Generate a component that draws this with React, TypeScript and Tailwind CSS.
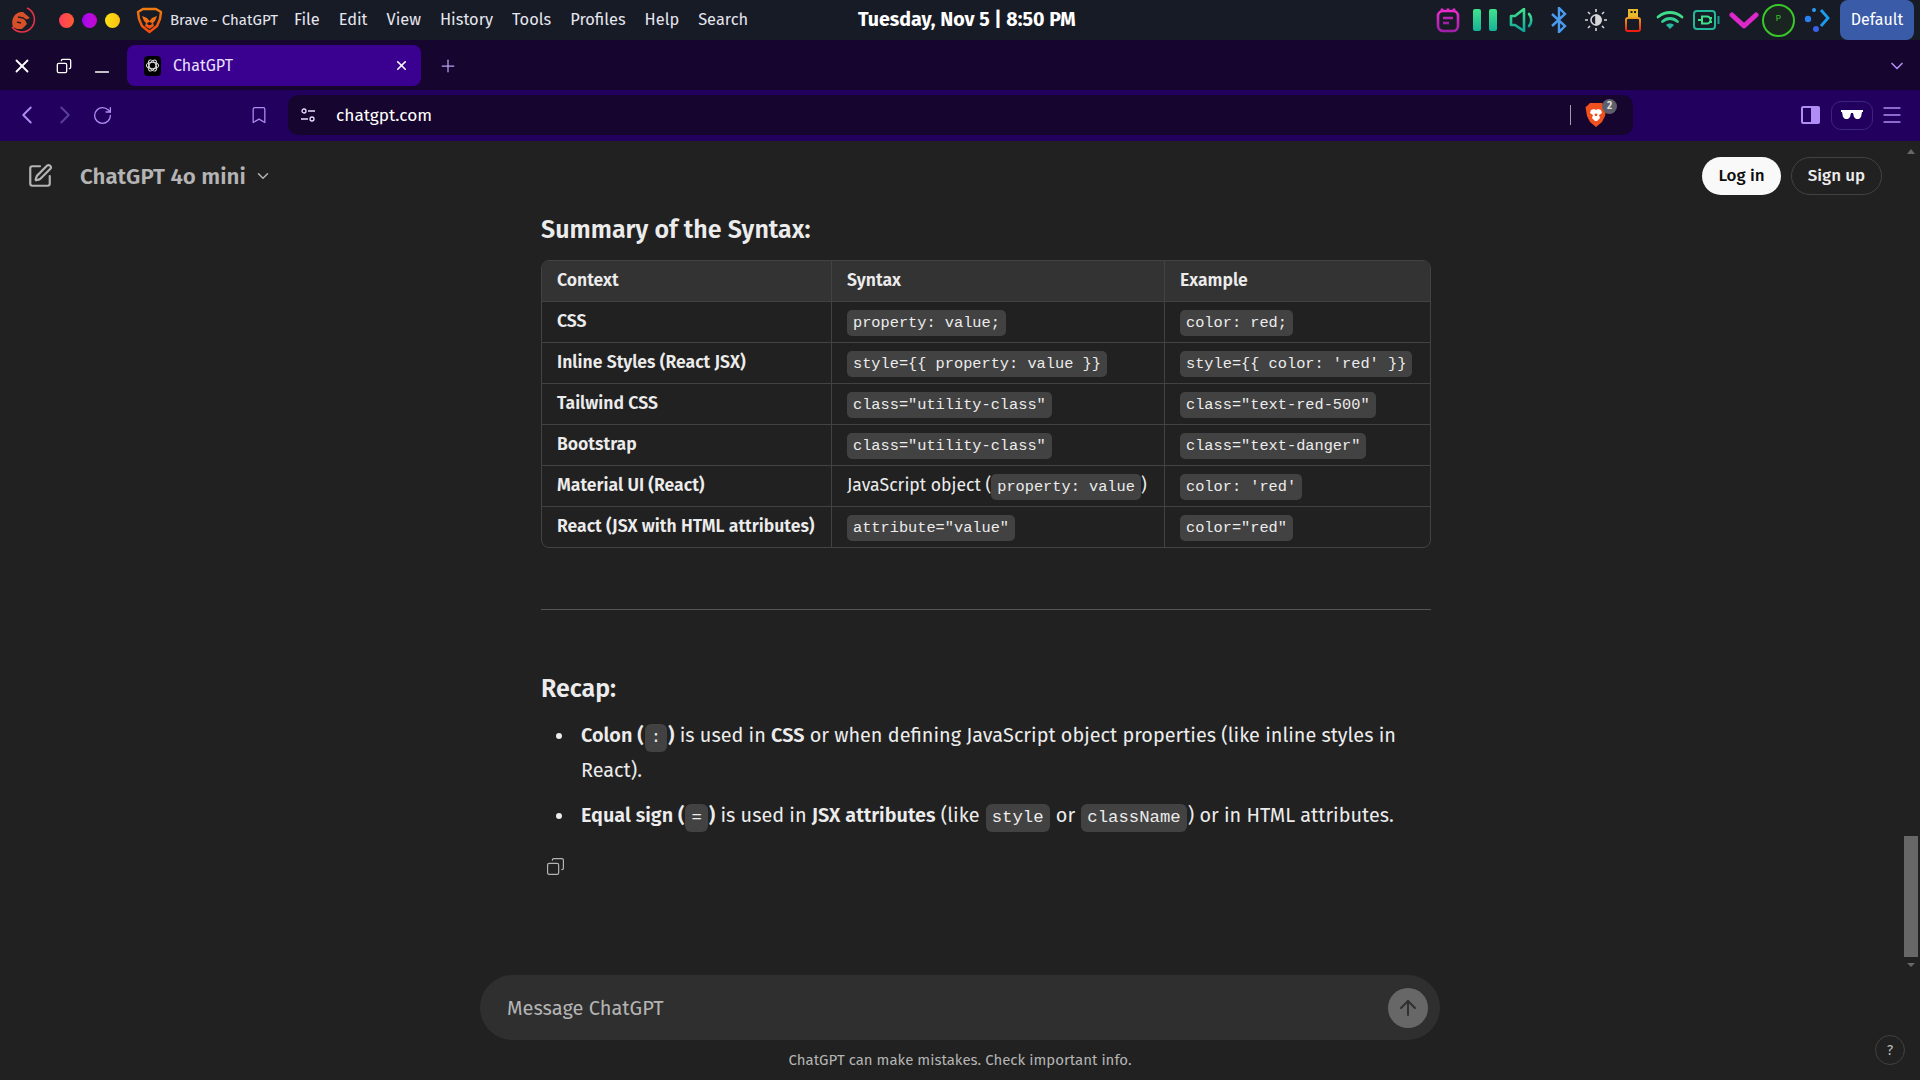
import React from 'react';
import { ChevronDown, ChevronLeft, ChevronRight, RotateCw, Bookmark, Plus, X, Menu, ArrowUp, SquarePen, Copy, Minus } from 'lucide-react';

const Chip = ({ children }: { children: React.ReactNode }) => (
  <code className="inline-block h-[26px] rounded-[5px] bg-[#424242] px-[6px] font-['Liberation_Mono',monospace] text-[15.300px] leading-[26px] text-[#ececec]">
    {children}
  </code>
);

const ListChip = ({ children }: { children: React.ReactNode }) => (
  <code className="mx-[1px] inline-block h-[28px] rounded-[6px] bg-[#424242] px-[6px] align-baseline font-['Liberation_Mono',monospace] text-[17.300px] leading-[28px] text-[#ececec]">
    {children}
  </code>
);

const rows: [string, React.ReactNode, React.ReactNode][] = [
  ['CSS', <Chip>property: value;</Chip>, <Chip>color: red;</Chip>],
  ['Inline Styles (React JSX)', <Chip>{'style={{ property: value }}'}</Chip>, <Chip>{"style={{ color: 'red' }}"}</Chip>],
  ['Tailwind CSS', <Chip>class="utility-class"</Chip>, <Chip>class="text-red-500"</Chip>],
  ['Bootstrap', <Chip>class="utility-class"</Chip>, <Chip>class="text-danger"</Chip>],
  ['Material UI (React)', <>JavaScript object (<Chip>property: value</Chip>)</>, <Chip>color: 'red'</Chip>],
  ['React (JSX with HTML attributes)', <Chip>attribute="value"</Chip>, <Chip>color="red"</Chip>],
];

const Grad = ({ id, from, to }: { id: string; from: string; to: string }) => (
  <defs>
    <linearGradient id={id} x1="0" y1="0" x2="0" y2="1">
      <stop offset="0" stopColor={from} />
      <stop offset="1" stopColor={to} />
    </linearGradient>
  </defs>
);

// outlined head in the system bar
const BraveOutline = () => (
  <svg width="27" height="27" viewBox="0 0 27 27" fill="none">
    <Grad id="lion" from="#f07c10" to="#f04a10" />
    <path d="M7 2h13l5 3-1 7-3 7-7.500 6L6 19 3 12 2 5z" stroke="url(#lion)" strokeWidth="2.400" strokeLinejoin="round" />
    <path d="M6 9l5 2 2.500 3 2.500-3 5-2-2 5-2 2 1 3-4.500 3L9 19l1-3-2-2z" fill="url(#lion)" />
    <path d="M11 16l2.500-1 2.500 1-1 2h-3z" fill="#171b26" />
  </svg>
);

// filled shield in the address bar
const BraveShield = () => (
  <svg width="22" height="26" viewBox="0 0 22 26">
    <path d="M5 1h12l3 3 1.500 1-1.500 9-3 6-6 5-6-5-3-6L.500 5 2 4z" fill="#f1501f" />
    <path d="M6 8l3-1 2 1 2-1 3 1 1 3-3 2 1 3-3 3h-2l-3-3 1-3-3-2z" fill="#ffffff" />
    <path d="M9.500 12l1.500-.500 1.500.500-.500 2h-2z" fill="#f1501f" />
  </svg>
);

const TrayIcons = () => (
  <div className="flex items-center">
    <div className="flex w-[37px] justify-center">
      <svg width="24" height="26" viewBox="0 0 24 26" fill="none" strokeWidth="2.600">
        <Grad id="g1" from="#ec2bd0" to="#a01fa8" />
        <rect x="2" y="4" width="20" height="20" rx="5" stroke="url(#g1)" />
        <path d="M6 1.500v3M12 1.500v3M18 1.500v3M7 11h10M7 16h6" stroke="url(#g1)" />
      </svg>
    </div>
    <div className="flex w-[37px] justify-center gap-[8px]">
      <div className="h-[22px] w-[8px] rounded-[2px] bg-gradient-to-b from-[#3fe38a] to-[#12b39a]" />
      <div className="h-[22px] w-[8px] rounded-[2px] bg-gradient-to-b from-[#3fe38a] to-[#12b39a]" />
    </div>
    <div className="flex w-[37px] justify-center">
      <svg width="26" height="24" viewBox="0 0 26 24" fill="none" strokeWidth="2.600">
        <Grad id="g2" from="#41e08a" to="#0fa79c" />
        <path d="M2 8h4l9-7v22l-9-6H2z" stroke="url(#g2)" strokeLinejoin="round" />
        <path d="M20 6c3 3 3 9 0 12" stroke="url(#g2)" strokeLinecap="round" />
      </svg>
    </div>
    <div className="flex w-[37px] justify-center">
      <svg width="16" height="26" viewBox="0 0 16 26" fill="none" strokeWidth="2.400">
        <path d="M1 7l13 12-6 6V1l6 6L1 19" stroke="#4a9bf0" />
      </svg>
    </div>
    <div className="flex w-[37px] justify-center">
      <svg width="22" height="22" viewBox="0 0 22 22" fill="none" stroke="#d6d6d6" strokeWidth="1.600">
        <circle cx="11" cy="11" r="5" />
        <path d="M11 6a5 5 0 0 1 0 10z" fill="#d6d6d6" />
        <path d="M11 0v3M11 19v3M0 11h3M19 11h3M3 3l2 2M17 17l2 2M3 19l2-2M17 5l2-2" />
      </svg>
    </div>
    <div className="flex w-[37px] justify-center">
      <svg width="16" height="24" viewBox="0 0 16 24" fill="none">
        <Grad id="g6" from="#f0a020" to="#ee1c10" />
        <rect x="3" y="1" width="10" height="9" fill="#e8b92c" />
        <rect x="5.500" y="3" width="2" height="2" fill="#171b26" />
        <rect x="9" y="3" width="2" height="2" fill="#171b26" />
        <rect x="1" y="10" width="14" height="13" rx="2" stroke="url(#g6)" strokeWidth="2" />
      </svg>
    </div>
    <div className="flex w-[37px] justify-center">
      <svg width="28" height="20" viewBox="0 0 28 20" fill="none" strokeWidth="2.800" strokeLinecap="round">
        <path d="M2 7c7-6 17-6 24 0" stroke="#3fdc8a" />
        <path d="M6.500 11.500c4.500-4 10.500-4 15 0" stroke="#35d090" />
        <path d="M10 15l4 4 4-4c-2-2-6-2-8 0z" fill="#25b9a0" stroke="none" />
      </svg>
    </div>
    <div className="flex w-[37px] justify-center">
      <svg width="27" height="20" viewBox="0 0 27 20" fill="none">
        <rect x="1" y="1" width="21" height="18" rx="3" stroke="#22b89a" strokeWidth="2" />
        <path d="M5 10h4M9 6.500h5a3.500 3.500 0 0 1 0 7H9zM16 8h3M16 12h3" stroke="#3ce08a" strokeWidth="2" />
        <rect x="24.500" y="6" width="2" height="8" fill="#1a9c8a" />
      </svg>
    </div>
    <div className="flex w-[37px] justify-center">
      <svg width="30" height="20" viewBox="0 0 30 20" fill="none">
        <path d="M3 5l12 11L27 5" stroke="#dc28c8" strokeWidth="5" strokeLinecap="round" strokeLinejoin="round" />
      </svg>
    </div>
    <div className="flex w-[33px] justify-center">
      <div className="flex h-[33px] w-[33px] items-center justify-center rounded-full border-2 border-[#39c82a] bg-[#1a2420] font-['Liberation_Mono',monospace] text-[9px] text-[#39c82a]">
        P
      </div>
    </div>
    <div className="ml-[4px] flex w-[36px] justify-center">
      <svg width="26" height="26" viewBox="0 0 26 26" fill="none">
        <circle cx="4" cy="12" r="3.200" fill="#2a80f0" />
        <circle cx="10" cy="3" r="2" fill="#2a9cf0" />
        <circle cx="12" cy="22" r="3" fill="#3a60e8" />
        <path d="M17 3l7 8-7 8" stroke="#1a9cf0" strokeWidth="2.800" />
      </svg>
    </div>
    <div className="ml-[5px] flex h-[40px] w-[74px] items-center justify-center rounded-[8px] bg-[#3a5ba8] text-[16px] text-white">
      Default
    </div>
  </div>
);

export default function App() {
  return (
    <div className="flex h-screen w-full flex-col overflow-hidden bg-[#212121] font-['Fira_Sans','Noto_Sans',sans-serif]">
      {/* system bar */}
      <div className="relative flex h-[40px] shrink-0 items-center bg-[#171b26] text-[16.400px] text-[#e6e6ee]">
        <svg className="ml-[9px]" width="28" height="28" viewBox="0 0 28 28" fill="none">
          <path d="M18 2a12.500 12.500 0 1 1-15 19" stroke="#e8324a" strokeWidth="1.600" />
          <path d="M4 21C1 12 7 5 14 6l7 6-5 2 2 4-5 5-5 0z" fill="#d8502a" />
          <path d="M9 11l5 1 3 2M8 16l4 1" stroke="#2a1a20" strokeWidth="1.500" />
        </svg>
        <div className="ml-[22px] flex gap-[8px]">
          <div className="h-[15px] w-[15px] rounded-full bg-gradient-to-r from-[#ff3d5a] to-[#ff5a30]" />
          <div className="h-[15px] w-[15px] rounded-full bg-gradient-to-r from-[#a000f0] to-[#c800d0]" />
          <div className="h-[15px] w-[15px] rounded-full bg-gradient-to-r from-[#ffe014] to-[#f8c014]" />
        </div>
        <div className="ml-[16px] flex"><BraveOutline /></div>
        <span className="ml-[7px] text-[15px]">Brave - ChatGPT</span>
        <div className="ml-[16px] flex gap-[19px]">
          <span>File</span>
          <span>Edit</span>
          <span>View</span>
          <span>History</span>
          <span>Tools</span>
          <span>Profiles</span>
          <span>Help</span>
          <span>Search</span>
        </div>
        <div className="absolute left-[858px] text-[19.600px] font-bold text-white">Tuesday, Nov 5 | 8:50 PM</div>
        <div className="ml-auto mr-[6px]"><TrayIcons /></div>
      </div>

      {/* tab strip */}
      <div className="flex h-[50px] shrink-0 items-center bg-[#16052e] pt-[1px] text-[#e8e0ff]">
        <X className="ml-[11px] text-white" size={22} strokeWidth={2} />
        <Copy className="ml-[23px] -scale-x-100 text-white" size={16} strokeWidth={2} />
        <Minus className="ml-[19px] mt-[12px] text-white" size={22} strokeWidth={1.500} />
        <div className="ml-[14px] flex h-[41px] w-[294px] items-center rounded-[8px] bg-[#3a0090] text-[16px]">
          <div className="ml-[17px] flex h-[20px] w-[17px] items-center justify-center rounded-[4px] bg-black">
            <svg width="15" height="15" viewBox="0 0 16 16" fill="none" stroke="#e0e0e0" strokeWidth="1.100">
              <ellipse cx="8" cy="8" rx="6.500" ry="3.500" />
              <ellipse cx="8" cy="8" rx="6.500" ry="3.500" transform="rotate(60 8 8)" />
              <ellipse cx="8" cy="8" rx="6.500" ry="3.500" transform="rotate(120 8 8)" />
            </svg>
          </div>
          <span className="ml-[12px]">ChatGPT</span>
          <X className="ml-auto mr-[12px] text-white" size={15} strokeWidth={2.500} />
        </div>
        <Plus className="ml-[17px] text-[#b9a0f0]" size={20} strokeWidth={1.500} />
        <ChevronDown className="ml-auto mr-[13px] text-[#b08cf5]" size={20} strokeWidth={2} />
      </div>

      {/* toolbar */}
      <div className="flex h-[51px] shrink-0 items-center bg-[#22005e] pb-[1px] text-[#b08cf5]">
        <ChevronLeft className="ml-[12px]" size={30} strokeWidth={1.500} />
        <ChevronRight className="ml-[8px] text-[#5c3f9a]" size={30} strokeWidth={1.500} />
        <RotateCw className="ml-[12px]" size={21} strokeWidth={1.500} />
        <Bookmark className="ml-[136px]" size={20} strokeWidth={1.500} />
        <div className="ml-[19px] flex h-[40px] w-[1345px] items-center rounded-[10px] bg-[#16052e]">
          <svg className="ml-[12px]" width="16" height="16" viewBox="0 0 16 16" fill="none" stroke="#e8e0ff" strokeWidth="1.300">
            <circle cx="4" cy="4" r="2" />
            <circle cx="12" cy="12" r="2" />
            <path d="M8 4h7M1 12h7" />
          </svg>
          <span className="ml-[20px] pt-[1px] text-[17.300px] text-white">chatgpt.com</span>
          <div className="ml-auto h-[20px] w-[1px] bg-[#a09ab0]" />
          <div className="relative ml-[14px] mr-[26px] flex">
            <BraveShield />
            <div className="absolute -right-[10px] -top-[3px] flex h-[15px] w-[15px] items-center justify-center rounded-full bg-[#5f5f6b] text-[10px] font-bold text-[#e0e0e0]">
              2
            </div>
          </div>
        </div>
        <div className="ml-[168px] flex h-[18px] w-[19px] items-center justify-end rounded-[2px] border-2 border-[#b08cf5]">
          <div className="h-full w-[7px] bg-[#b08cf5]" />
        </div>
        <div className="ml-[11px] flex h-[29px] w-[42px] items-center justify-center rounded-[10px] border border-[#3c2480]">
          <svg width="22" height="10" viewBox="0 0 22 10" fill="white">
            <path d="M0 0h22v2h-1l-1 5-2 2h-3l-2-2-1-4h-2L9 7 7 9H4L2 7 1 2H0z" />
          </svg>
        </div>
        <Menu className="ml-[7px]" size={24} strokeWidth={1.300} />
      </div>

      {/* page */}
      <div className="relative flex min-h-0 flex-1 flex-col text-[#ececec]">
        <div className="flex h-[70px] shrink-0 items-center">
          <SquarePen className="ml-[27px] text-[#b4b4b4]" size={26} strokeWidth={2} />
          <span className="ml-[27px] pt-[1px] text-[22.300px] font-semibold text-[#b4b4b4]">ChatGPT 4o mini</span>
          <ChevronDown className="ml-[8px] text-[#b4b4b4]" size={18} strokeWidth={2} />
          <div className="ml-auto mr-[38px] flex gap-[10px] text-[17px] font-medium">
            <div className="flex h-[38px] w-[79px] items-center justify-center rounded-full bg-[#f9f9f9] text-[#0d0d0d]">Log in</div>
            <div className="flex h-[38px] w-[91px] items-center justify-center rounded-full border border-[#424242] text-[#ececec]">Sign up</div>
          </div>
        </div>

        <div className="ml-[541px] min-h-0 w-[890px] flex-1">
          <h3 className="flex h-[38px] items-center pt-[2px] text-[25px] font-semibold">Summary of the Syntax:</h3>
          <div className="mt-[11px] overflow-hidden rounded-[8px] border border-[#424242] text-[17.600px]">
            <div className="flex h-[40px] items-center bg-[#333333] font-semibold">
              <div className="flex h-full w-[290px] items-center border-r border-[#424242] pl-[15px]">Context</div>
              <div className="flex h-full w-[333px] items-center border-r border-[#424242] pl-[15px]">Syntax</div>
              <div className="pl-[15px]">Example</div>
            </div>
            {rows.map(([context, syntax, example]) => (
              <div key={context} className="flex h-[41px] items-center border-t border-[#424242]">
                <div className="flex h-full w-[290px] items-center whitespace-nowrap border-r border-[#424242] pl-[15px] font-semibold">{context}</div>
                <div className="flex h-full w-[333px] items-center whitespace-pre border-r border-[#424242] pl-[15px] pt-[1px]">{syntax}</div>
                <div className="pl-[15px]">{example}</div>
              </div>
            ))}
          </div>
          <hr className="mt-[61px] border-[#555555]" />
          <h3 className="mt-[60px] flex h-[38px] items-center pt-[2px] text-[25px] font-semibold">Recap:</h3>
          <ul className="mt-[10px] list-none pl-[40px] text-[19.850px] leading-[35px]">
            <li className="relative before:absolute before:left-[-25px] before:top-[15px] before:h-[6px] before:w-[6px] before:rounded-full before:bg-[#ececec]">
              <b className="font-semibold">Colon (</b><ListChip>:</ListChip><b className="font-semibold">)</b> is used in <b className="font-semibold">CSS</b> or when defining JavaScript object properties (like inline styles in React).
            </li>
            <li className="relative mt-[10px] before:absolute before:left-[-25px] before:top-[15px] before:h-[6px] before:w-[6px] before:rounded-full before:bg-[#ececec]">
              <b className="font-semibold">Equal sign (</b><ListChip>=</ListChip><b className="font-semibold">)</b> is used in <b className="font-semibold">JSX attributes</b> (like <ListChip>style</ListChip> or <ListChip>className</ListChip>) or in HTML attributes.
            </li>
          </ul>
          <Copy className="ml-[5px] mt-[24px] -scale-x-100 text-[#b4b4b4]" size={19} strokeWidth={1.500} />
        </div>

        <div className="flex shrink-0 flex-col items-center">
          <div className="flex h-[65px] w-[960px] items-center rounded-full bg-[#2f2f2f]">
            <span className="ml-[27px] text-[20px] text-[#b4b4b4]">Message ChatGPT</span>
            <div className="ml-auto mr-[12px] flex h-[40px] w-[40px] items-center justify-center rounded-full bg-[#676767]">
              <ArrowUp className="text-[#2f2f2f]" size={24} strokeWidth={2} />
            </div>
          </div>
          <div className="flex h-[40px] items-center text-[15px] text-[#b4b4b4]">ChatGPT can make mistakes. Check important info.</div>
        </div>

        {/* overlay scrollbar and help */}
        <div className="absolute right-[5px] top-[8px] h-0 w-0 border-x-[4px] border-b-[5px] border-x-transparent border-b-[#676767]" />
        <div className="absolute bottom-[123px] right-[2px] h-[121px] w-[14px] bg-[#676767]" />
        <div className="absolute bottom-[113px] right-[5px] h-0 w-0 border-x-[4px] border-t-[4px] border-x-transparent border-t-[#676767]" />
        <div className="absolute bottom-[15px] right-[15px] flex h-[30px] w-[30px] items-center justify-center rounded-full border border-[#424242] text-[14px] text-[#b4b4b4]">?</div>
      </div>
    </div>
  );
}
